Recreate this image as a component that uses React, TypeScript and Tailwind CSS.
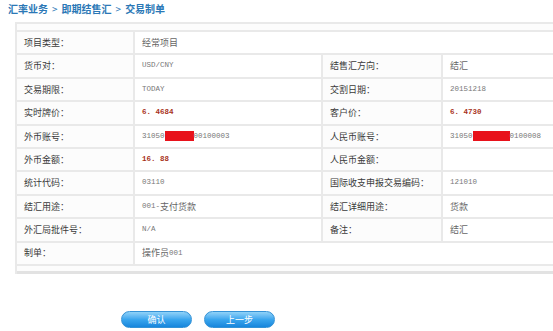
const cjk = "font-['SimSun','Noto_Sans_CJK_SC',sans-serif]";
const mono = "font-['Liberation_Mono','Noto_Sans_CJK_SC',monospace]";

const Label = ({ children }: { children: React.ReactNode }) => (
  <div
    className={`h-[23.4px] flex items-center pl-[7px] border-b-2 border-r-2 border-[#e9e9e9] bg-[#fcfcfc] text-[9px] text-[#3a3a3a] ${cjk}`}
  >
    {children}
  </div>
);

const Value = ({
  children,
  span,
  red,
  last,
}: {
  children?: React.ReactNode;
  span?: boolean;
  red?: boolean;
  last?: boolean;
}) => (
  <div
    className={`h-[23.4px] flex items-center pl-[7px] border-b-2 border-[#e9e9e9] bg-white text-[7.5px] ${mono} ${
      span ? "col-span-3" : ""
    } ${last ? "" : "border-r-2"} ${red ? "text-[#a8321a] font-bold" : "text-[#777]"}`}
  >
    {children}
  </div>
);

const Cn = ({ children }: { children: React.ReactNode }) => (
  <span className={`text-[9px] text-[#666] ${cjk}`}>{children}</span>
);

const Masked = ({ pre, post, w }: { pre: string; post: string; w: number }) => (
  <span className="flex items-center">
    <span>{pre}</span>
    <span className="inline-block h-[10px] bg-[#e8121b]" style={{ width: w }} />
    <span>{post}</span>
  </span>
);

const Button = ({ label }: { label: string }) => (
  <button
    className={`w-[71px] h-[17px] rounded-full border border-[#3592d6] bg-gradient-to-b from-[#8fd2f8] via-[#3aa6ee] to-[#1686dc] text-white text-[9px] ${cjk}`}
  >
    {label}
  </button>
);

const Sep = () => <span className="mx-[4px] font-normal">&gt;</span>;

export default function App() {
  return (
    <div className="w-[553px] h-[331px] overflow-hidden bg-white relative">
      <div
        className={`h-[22px] pl-[8px] pt-[1px] text-[10px] font-bold text-[#2b78b6] ${cjk}`}
      >
        汇率业务
        <Sep />
        即期结售汇
        <Sep />
        交易制单
      </div>
      <div className="ml-[15px] w-[620px] border-t-2 border-l-2 border-[#e9e9e9] bg-[#fcfcfc]">
        <div className="h-[8px] border-b-2 border-[#e9e9e9]" />
        <div className="grid grid-cols-[118px_188px_120px_1fr]">
          <Label>项目类型：</Label>
          <Value span last>
            <Cn>经常项目</Cn>
          </Value>

          <Label>货币对：</Label>
          <Value>USD/CNY</Value>
          <Label>结售汇方向：</Label>
          <Value last>
            <Cn>结汇</Cn>
          </Value>

          <Label>交易期限：</Label>
          <Value>TODAY</Value>
          <Label>交割日期：</Label>
          <Value last>20151218</Value>

          <Label>实时牌价：</Label>
          <Value red>6. 4684</Value>
          <Label>客户价：</Label>
          <Value red last>
            6. 4730
          </Value>

          <Label>外币账号：</Label>
          <Value>
            <Masked pre="31050" post="00100003" w={29} />
          </Value>
          <Label>人民币账号：</Label>
          <Value last>
            <Masked pre="31050" post="0100008" w={37} />
          </Value>

          <Label>外币金额：</Label>
          <Value red>16. 88</Value>
          <Label>人民币金额：</Label>
          <Value last />

          <Label>统计代码：</Label>
          <Value>03110</Value>
          <Label>国际收支申报交易编码：</Label>
          <Value last>121010</Value>

          <Label>结汇用途：</Label>
          <Value>
            001-<Cn>支付货款</Cn>
          </Value>
          <Label>结汇详细用途：</Label>
          <Value last>
            <Cn>货款</Cn>
          </Value>

          <Label>外汇局批件号：</Label>
          <Value>N/A</Value>
          <Label>备注：</Label>
          <Value last>
            <Cn>结汇</Cn>
          </Value>

          <Label>制单：</Label>
          <Value span last>
            <Cn>操作员</Cn>001
          </Value>
        </div>
        <div className="h-[8px] border-b-[3px] border-[#e2e2e2]" />
      </div>
      <div className="flex gap-[12px] pl-[121px] pt-[37px]">
        <Button label="确认" />
        <Button label="上一步" />
      </div>
    </div>
  );
}
